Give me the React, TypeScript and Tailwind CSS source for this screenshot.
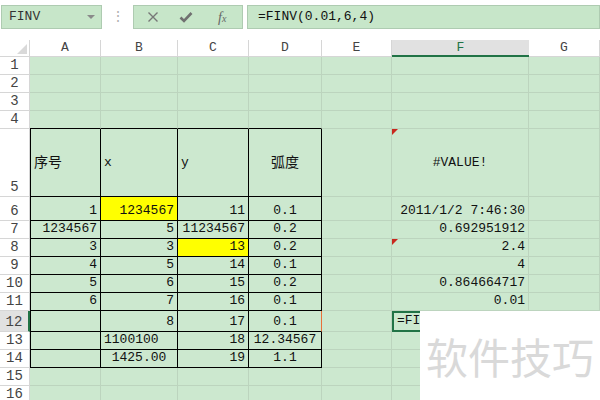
import React from "react";

type Cell = { t: string; a?: "l" | "r" | "c"; y?: boolean };

const cols = ["A", "B", "C", "D", "E", "F", "G"];
const rowNums = [1, 2, 3, 4, 5, 6, 7, 8, 9, 10, 11, 12, 13, 14, 15, 16];

const data: Record<string, Cell> = {
  A5: { t: "序号", a: "l" },
  B5: { t: "x", a: "l" },
  C5: { t: "y", a: "l" },
  D5: { t: "弧度", a: "c" },
  F5: { t: "#VALUE!", a: "c" },
  A6: { t: "1" },
  B6: { t: "1234567", y: true },
  C6: { t: "11" },
  D6: { t: "0.1", a: "c" },
  F6: { t: "2011/1/2 7:46:30" },
  A7: { t: "1234567" },
  B7: { t: "5" },
  C7: { t: "11234567" },
  D7: { t: "0.2", a: "c" },
  F7: { t: "0.692951912" },
  A8: { t: "3" },
  B8: { t: "3" },
  C8: { t: "13", y: true },
  D8: { t: "0.2", a: "c" },
  F8: { t: "2.4" },
  A9: { t: "4" },
  B9: { t: "5" },
  C9: { t: "14" },
  D9: { t: "0.1", a: "c" },
  F9: { t: "4" },
  A10: { t: "5" },
  B10: { t: "6" },
  C10: { t: "15" },
  D10: { t: "0.2", a: "c" },
  F10: { t: "0.864664717" },
  A11: { t: "6" },
  B11: { t: "7" },
  C11: { t: "16" },
  D11: { t: "0.1", a: "c" },
  F11: { t: "0.01" },
  B12: { t: "8" },
  C12: { t: "17" },
  D12: { t: "0.1", a: "c" },
  F12: { t: "=FINV(0.01,6,4)", a: "l" },
  B13: { t: "1100100", a: "l" },
  C13: { t: "18" },
  D13: { t: "12.34567", a: "c" },
  B14: { t: "1425.00", a: "c" },
  C14: { t: "19" },
  D14: { t: "1.1", a: "c" },
};

const inTable = (c: string, r: number) => ["A", "B", "C", "D"].includes(c) && r >= 5 && r <= 14;

const SheetCell = ({ c, r }: { c: string; r: number }) => {
  const cell = data[c + r];
  const table = inTable(c, r);
  const aboveTable = ["A", "B", "C", "D"].includes(c) && r === 4;
  const active = c === "F" && r === 12;

  let border = "border-r border-b border-[#bcd4be]";
  if (table) border = "border-r border-b border-black";
  if (table && c === "A") border = "border-l border-r border-b border-black";
  if (table && c === "D" && r === 12) border = "border-r border-b border-black border-r-[#e8703a]";
  if (aboveTable) border = "border-r border-b border-[#bcd4be] border-b-black";
  if (active) border = "border-2 border-[#217346]";

  const align = !cell || !cell.a || cell.a === "r" ? "justify-end pr-[3px]" : cell.a === "l" ? "justify-start pl-[3px]" : "justify-center";
  const vert = r === 5 ? "items-center" : "items-end pb-[1px]";
  const bg = cell?.y ? "bg-[#ffff00]" : "bg-[#cce8cf]";
  const cjk = r === 5 && (c === "A" || c === "D") ? "text-[14px]" : "text-[13px]";

  return (
    <div className={`relative flex overflow-hidden whitespace-nowrap leading-[16px] text-[#111] ${cjk} ${align} ${vert} ${bg} ${border}`}>
      {c === "F" && (r === 5 || r === 8) && (
        <div className="absolute left-0 top-0 h-0 w-0 border-t-[6px] border-r-[6px] border-t-[#c8281e] border-r-transparent" />
      )}
      {active ? <span className="block w-[24px] overflow-hidden">{cell?.t}</span> : cell?.t}
    </div>
  );
};

const Toolbar = () => (
  <div className="flex h-[40px] items-start bg-white pt-[5px] text-[13px] text-[#333]">
    <div className="ml-[1px] flex h-[24px] w-[101px] items-center justify-between border border-[#aecbb1] bg-[#c7e6c9] pl-[7px] pr-[6px]">
      <span>FINV</span>
      <span className="h-0 w-0 border-x-[4px] border-t-[4px] border-x-transparent border-t-[#8a8a8a]" />
    </div>
    <div className="flex h-[24px] w-[31px] items-center justify-center text-[14px] text-[#b0b0b0]">⋮</div>
    <div className="flex h-[24px] w-[110px] items-center border border-[#aecbb1] bg-[#c7e6c9]">
      <svg width="12" height="12" viewBox="0 0 12 12" className="ml-[13px]">
        <path d="M1.5 1.5 L10.5 10.5 M10.5 1.5 L1.5 10.5" stroke="#777" strokeWidth="1.4" fill="none" />
      </svg>
      <svg width="14" height="12" viewBox="0 0 14 12" className="ml-[20px]">
        <path d="M1.5 6.5 L5 10 L12.5 2" stroke="#707070" strokeWidth="2.6" fill="none" />
      </svg>
      <span className="ml-[25px] italic text-[#666]" style={{ fontFamily: '"Liberation Serif", serif' }}>
        <span className="text-[14px]">f</span>
        <span className="text-[10px]">x</span>
      </span>
    </div>
    <div className="ml-[4px] flex h-[24px] flex-1 items-center border border-[#aecbb1] bg-[#c7e6c9] pl-[10px] text-[#111]">
      =FINV(0.01,6,4)
    </div>
  </div>
);

export default function App() {
  return (
    <div
      className="relative h-[400px] w-[600px] overflow-hidden bg-white"
      style={{ fontFamily: '"Liberation Mono", "Noto Sans CJK SC", monospace' }}
    >
      <Toolbar />
      <div className="grid grid-cols-[30px_71px_77px_71px_73px_70px_137px_71px] grid-rows-[17px_18px_18px_18px_18px_68px_24px_18px_18px_18px_18px_18px_21px_18px_18px_18px_18px]">
        {/* column headers */}
        <div className="relative border-r border-b border-[#d6d6d6] bg-white">
          <div className="absolute bottom-[2px] right-[2px] h-0 w-0 border-b-[10px] border-l-[10px] border-b-[#d9d9d9] border-l-transparent" />
        </div>
        {cols.map((c) =>
          c === "F" ? (
            <div key={c} className="flex items-center justify-center border-b-2 border-[#217346] bg-[#e1e1e1] text-[13px] text-[#217346]">
              {c}
            </div>
          ) : (
            <div key={c} className="flex items-center justify-center border-r border-b border-[#d6d6d6] bg-white text-[13px] text-[#444]">
              {c}
            </div>
          )
        )}

        {rowNums.map((r) => (
          <React.Fragment key={r}>
            {r === 12 ? (
              <div className="flex items-end justify-center border-r-2 border-b border-[#217346] border-b-[#d6d6d6] bg-[#e1e1e1] text-[14px] leading-[17px] text-[#444]">
                {r}
              </div>
            ) : (
              <div className="flex items-end justify-center border-r border-b border-[#d6d6d6] bg-white text-[14px] leading-[17px] text-[#444]">
                {r}
              </div>
            )}
            {cols.map((c) => (
              <SheetCell key={c + r} c={c} r={r} />
            ))}
          </React.Fragment>
        ))}
      </div>

      {/* watermark */}
      <div
        className="absolute left-[420px] top-[311px] flex h-[89px] w-[180px] items-center justify-center bg-white text-[42px] text-[#d9d9d9]"
        style={{ fontFamily: '"Noto Sans CJK SC", sans-serif' }}
      >
        软件技巧
      </div>
    </div>
  );
}
